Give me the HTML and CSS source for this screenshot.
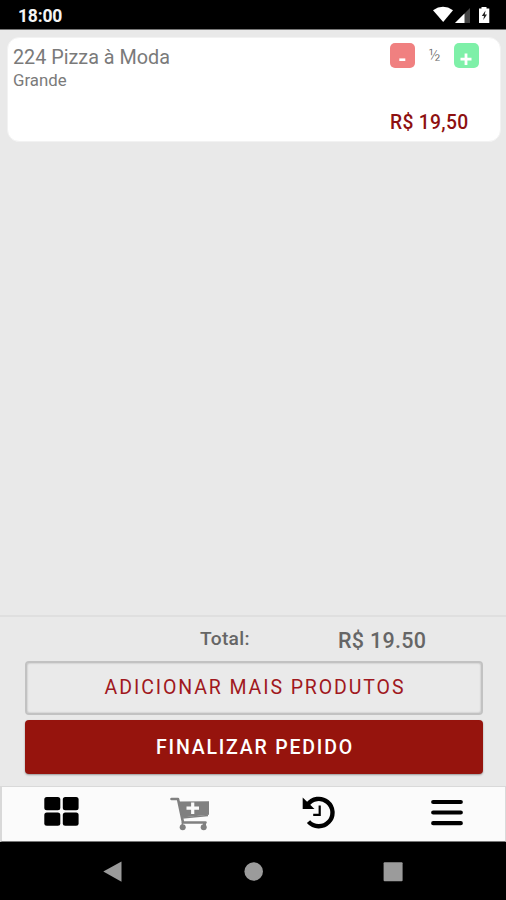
FILE: index.html
```html
<!DOCTYPE html>
<html lang="pt-BR">
<head>
<meta charset="utf-8">
<title>Pedido</title>
<link rel="stylesheet" href="styles.css">
</head>
<body>
<header class="status">
  <span class="clock">18:00</span>
  <svg class="status-icons" width="58" height="18" viewBox="0 0 58 18">
    <path d="M0 4.200Q10 -2.600 20 4.200L10.200 16Z" fill="#fff"/>
    <path d="M37 2V17H22Z" fill="#444"/>
    <path d="M31.500 7.500V17H22Z" fill="#fff"/>
    <path d="M48.500 1H53.500V2.500H56.300V17H46V2.500H48.500Z" fill="#fff"/>
    <path d="M52.500 4.500L48.800 10H51L50.300 14L54 8.500H51.800Z" fill="#222"/>
  </svg>
</header>
<main class="content">
  <article class="card">
    <div class="item">
      <h1 class="name">224 Pizza à Moda</h1>
      <p class="size">Grande</p>
    </div>
    <div class="side">
      <div class="stepper">
        <button class="step minus" aria-label="Diminuir"><svg width="25" height="25" viewBox="0 0 25 25"><path d="M9.300 16.700H15.300" stroke="#fff" stroke-width="2.600"/></svg></button>
        <span class="qty">½</span>
        <button class="step plus" aria-label="Aumentar"><svg width="25" height="25" viewBox="0 0 25 25"><path d="M6.500 16.200H17.500M12 10.500V22" stroke="#fff" stroke-width="2.800"/></svg></button>
      </div>
      <p class="price">R$ 19,50</p>
    </div>
  </article>
</main>
<footer class="checkout">
  <div class="total"><span class="label">Total:</span><span class="sum">R$ 19.50</span></div>
  <button class="btn outline"><span>ADICIONAR MAIS PRODUTOS</span></button>
  <button class="btn solid"><span>FINALIZAR PEDIDO</span></button>
</footer>
<nav class="tabs">
  <svg class="grid" width="36" height="32" viewBox="0 0 36 32">
    <rect x="0.300" y="1" width="16" height="13.300" rx="2.500"/><rect x="18.800" y="1" width="15.800" height="13.300" rx="2.500"/>
    <rect x="0.300" y="16.500" width="16" height="13.300" rx="2.500"/><rect x="18.800" y="16.500" width="15.800" height="13.300" rx="2.500"/>
  </svg>
  <svg class="cart" width="40" height="34" viewBox="0 0 40 34">
    <path d="M8.500 4.500L39 4.200V17.800L12 20.500Z" fill="#808080"/>
    <path d="M1.500 2H8L13 25.500H35.500" fill="none" stroke="#808080" stroke-width="2.600" stroke-linejoin="round" stroke-linecap="round"/>
    <path d="M12 21L38 18.500M12.500 25L12 31" stroke="#808080" stroke-width="1.500"/>
    <path d="M34.500 25V29" stroke="#808080" stroke-width="3"/>
    <circle cx="12.700" cy="30.300" r="3" fill="#808080"/><circle cx="33.700" cy="30.300" r="3" fill="#808080"/>
    <path d="M16.500 11.200H29M22.700 5.500V17" stroke="#fbfbfb" stroke-width="3.200"/>
  </svg>
  <svg class="history" width="34" height="34" viewBox="0 0 34 34">
    <path d="M5.500 8.800A13.700 13.700 0 1 1 6.500 25.600" fill="none" stroke="#000" stroke-width="4.400"/>
    <path d="M.7 1.500V13H12.500Z"/>
    <path d="M17.700 9.500V18.800H11.200" fill="none" stroke="#000" stroke-width="2.200"/>
  </svg>
  <svg class="menu" width="34" height="30" viewBox="0 0 34 30">
    <path d="M2.200 4H29.800M2.200 14.500H29.800M2.200 25.200H29.800" stroke="#000" stroke-width="4.200" stroke-linecap="round"/>
  </svg>
</nav>
<div class="system">
  <svg class="back" width="20" height="22" viewBox="0 0 20 22"><path d="M.3 10.500L18.500 .5V20.700Z"/></svg>
  <svg class="home" width="20" height="20" viewBox="0 0 20 20"><circle cx="9.700" cy="9.500" r="9.300"/></svg>
  <svg class="recent" width="20" height="20" viewBox="0 0 20 20"><rect x=".6" y=".3" width="19" height="19" rx="1"/></svg>
</div>
</body>
</html>
```
FILE: styles.css
```css
* { box-sizing: border-box; margin: 0; padding: 0; }
body {
  width: 506px;
  height: 900px;
  display: flex;
  flex-direction: column;
  overflow: hidden;
  background: #e9e9e9;
  font-family: Roboto, sans-serif;
}
button { border: 0; font-family: inherit; }
svg { display: block; flex: none; }

.status {
  height: 30px;
  flex: none;
  display: flex;
  justify-content: space-between;
  padding: 6px 15px 0 18px;
  background: #000;
  border-bottom: 1px solid #777;
}
.clock { color: #f4f4f4; font-size: 17.500px; line-height: 21px; font-weight: 700; letter-spacing: -0.2px; }

.content { flex: 1; padding: 7px 5px 0 7px; }
.card {
  height: 105px;
  display: flex;
  justify-content: space-between;
  padding: 5px 21px 0 5px;
  background: #fff;
  border: 1px solid #f2f2f2;
  border-radius: 12px;
}
.name { margin-top: 3px; font-size: 19.800px; line-height: 24px; font-weight: 400; color: #7a7a7a; white-space: nowrap; }
.size { font-size: 16.800px; line-height: 20px; color: #7a7a7a; }
.side { width: 89px; }
.stepper { display: flex; justify-content: space-between; align-items: center; height: 25px; }
.step { width: 25px; height: 25px; border-radius: 5px; }
.minus { background: #f08080; }
.plus { background: #7ef0a8; }
.qty { font-size: 16px; line-height: 20px; font-weight: 300; color: #666; }
.price { margin-top: 43px; font-size: 19.300px; line-height: 24px; font-weight: 500; letter-spacing: 0.300px; color: #8e1010; white-space: nowrap; }

.checkout {
  height: 171px;
  flex: none;
  padding: 9px 23px 0 25px;
  border-top: 2px solid #dfdfdf;
}
.total { display: flex; height: 35px; color: #666; font-weight: 500; }
.label { width: 138px; margin-left: 175px; font-size: 19.200px; line-height: 25px; letter-spacing: 0.300px; }
.sum { font-size: 21.500px; line-height: 29px; letter-spacing: 0.300px; white-space: nowrap; }
.btn {
  display: flex;
  align-items: center;
  justify-content: center;
  width: 458px;
  height: 54px;
  padding-left: 2px;
  border-radius: 4px;
  font-size: 19.500px;
  letter-spacing: 1.900px;
  white-space: nowrap;
}
.outline { background: #eaeaea; border: 2px solid #c2c2c2; box-shadow: inset 0 0 2px #aaa; color: #a01820; padding-bottom: 2px; }
.solid { margin-top: 5px; padding-top: 1px; background: #96140d; color: #fff; font-weight: 500; letter-spacing: 1.800px; box-shadow: 0 1px 2px #999; }

.tabs {
  height: 56px;
  flex: none;
  display: flex;
  align-items: flex-start;
  padding: 9px 0 0 42px;
  background: #fbfbfb;
  border: 1px solid #d9d9d9;
  border-left-width: 2px;
  border-bottom: 1px solid #777;
}
.cart { margin: 1px 0 0 90px; }
.history { margin-left: 92px; }
.menu { margin: 2px 0 0 95px; }

.system {
  height: 58px;
  flex: none;
  display: flex;
  align-items: flex-start;
  padding: 19px 0 0 103px;
  background: #000;
  fill: #9b9b9b;
}
.home { margin: 1px 0 0 121px; }
.recent { margin: 1px 0 0 119px; }
```
